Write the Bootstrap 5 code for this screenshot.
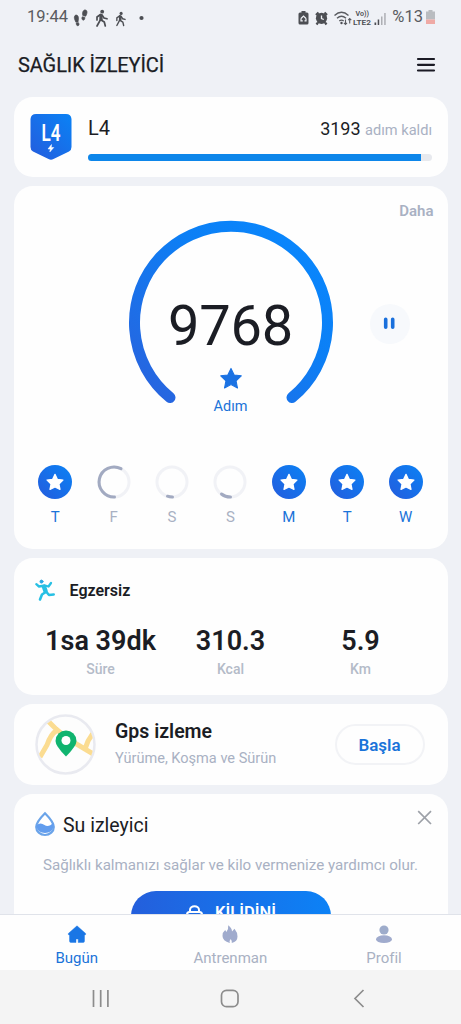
<!DOCTYPE html>
<html lang="tr">
<head>
<meta charset="utf-8">
<meta name="viewport" content="width=device-width, initial-scale=1">
<title>Sağlık İzleyici</title>
<link href="https://cdn.jsdelivr.net/npm/bootstrap@5.3.0/dist/css/bootstrap.min.css" rel="stylesheet">
<style>
body{font-family:Roboto,"Liberation Sans",sans-serif;background:#eff1f6;color:#1b1d24;height:1024px;overflow:hidden;line-height:1}
svg{display:block;flex:none;overflow:visible}
.muted{color:#a9b1c3}
.blue{color:#1a73d9}
.status{height:35px;padding:0 26px 0 27px;color:#595b60;font-size:16.5px}
.top-bar{height:62px;padding:0 26px 2px 18px}
.top-bar h1{font-size:20px;-webkit-text-stroke:.25px;letter-spacing:-.1px}
.feed{height:818px;padding:0 13.5px;gap:9px;overflow:hidden}
.panel{background:#fefefe;border-radius:19px;flex:none}
.level{height:80px;padding:0 15.5px 0 16.5px;gap:16px}
.level .progress{height:6.5px;background:#e7e9ee;border-radius:4px}
.level .progress-bar{background:#0d86ea}
.lv{font-size:20px}
.left{font-size:18px}
.left small{font-size:14.6px}
.steps{height:363px}
.steps .more{font-size:15px;font-weight:600;height:36px;padding:18px 14px 0}
.dial{grid-template-columns:1fr 204px 1fr;height:204px}
.dial-in{padding-top:76px}
.count{font-size:56px;letter-spacing:-.2px}
.pause{width:40px;height:40px;border-radius:50%;background:#f7f9fc}
.week{padding:39px 12.5px 0}
.day{width:58.4px;font-size:15px;gap:11px}
.exercise{height:137px;padding-top:20px}
.stats{padding:0 22px}
.stats>div{flex:1 1 0}
.big{font-size:27px;font-weight:600;white-space:nowrap}
.lbl{font-size:14px;font-weight:500;color:#b4bbc8;margin-top:7px}
.gps{height:81px;padding:0 23px 0 21px}
.start{width:90px;height:41px;border:2px solid #f2f3f6;border-radius:21px;font-size:17px;font-weight:600;background:#fefefe;padding:2px 0 0}
.water{height:180px}
.unlock{width:200px;height:50px;border-radius:25px;background:linear-gradient(90deg,#245fdc,#0c82f6);color:#fff;font-size:16.5px;font-weight:600;border:0}
.tabs{height:55px;background:#fefefe;box-shadow:0 -1px 0 #e0e3ea;position:relative;padding:0}
.tab{width:153.6px;font-size:15px;padding-top:10px;gap:8px}
.sys{height:54px;background:#f4f4f4;position:relative}
</style>
</head>
<body>
<svg width="0" height="0" class="position-absolute">
<defs>
<linearGradient id="ringG" x1="0" y1="1" x2="1" y2="0"><stop offset="0" stop-color="#2a62dd"/><stop offset=".6" stop-color="#0c7ff5"/><stop offset="1" stop-color="#0989ff"/></linearGradient>
<linearGradient id="dotG" x1="0" y1="1" x2="1" y2="0"><stop offset="0" stop-color="#245cdd"/><stop offset="1" stop-color="#0a82f5"/></linearGradient>
<path id="star" d="M0-10 3-3.700 9.700-3 4.800 1.800 6.100 8.500 0 5.300-6.100 8.500-4.800 1.800-9.700-3-3-3.700Z" stroke-linejoin="round"/>
<g id="done"><circle cx="17" cy="17" r="17" fill="url(#dotG)"/><use href="#star" transform="translate(17 17.500) scale(.82)" fill="#fff" stroke="#fff" stroke-width="1.500"/></g>
</defs>
</svg>
<div class="status d-flex align-items-center justify-content-between">
  <div class="d-flex align-items-center"><span>19:44</span>
    <svg width="78" height="18" style="margin-left:6px" fill="#4c4e53">
      <path d="M1 6.500c2-1.200 3.500.3 3.500 3l-.5 3.500-2.100.2C.7 10.500-.5 8.500 1 6.500ZM2.300 14l2.200-.3c1 1.800.5 3-.8 3S2.300 15.300 2.300 14ZM11.500 1c2.200.6 1.800 3.500.2 6.200l-2.900-.7C8 3 9.500.5 11.500 1ZM8.300 7.800l2.600.6c-.1 2-.8 3-1.900 2.700S7.500 9.300 8.300 7.800Z" stroke="#4c4e53" stroke-width=".7"/>
      <g id="walk"><circle cx="28.200" cy="2.700" r="1.900"/><path d="M26.500 5.500 23 8v3M26.800 5.500l-.5 5.500L23 17M26.300 10.500l4 2.500 1 4M28 6l2 3 3 .8" fill="none" stroke="#4c4e53" stroke-width="1.700" stroke-linecap="round" stroke-linejoin="round"/><path d="M25.500 5.200h2.700l.6 6-3.300.3Z"/></g>
      <use href="#walk" transform="translate(24 2.200) scale(.82 .84)"/>
      <circle cx="67.500" cy="9" r="2.100"/>
    </svg>
  </div>
  <div class="d-flex align-items-center">
    <svg width="92" height="18" fill="#4c4e53">
      <path d="M4.500 2h4v1.500H10q1.500 0 1.500 1.500v9q0 1.500-1.500 1.500H3Q1.500 15.500 1.500 14V5Q1.500 3.500 3 3.500h1.500Z"/><path d="M4 9.500 6.500 7 9 9.500M4 9.500v2.300h1.800M9 9.500v2.300H7.500" fill="none" stroke="#eff1f6" stroke-width="1.200"/>
      <circle cx="24.500" cy="9.300" r="5.600"/><path d="m19 6 2.500-2.500M30 6l-2.500-2.500M21 13.500l-1.500 2M28 13.500l1.500 2" stroke="#4c4e53" stroke-width="2.200"/><path d="M24.500 6.500v3l2.300 1" fill="none" stroke="#eff1f6" stroke-width="1.300"/>
      <g fill="none" stroke="#595b60" stroke-width="1.400"><path d="M37.500 6.500q7-6.500 14 0M40 9.300q4.500-4 9 0M42.300 12q2.200-1.800 4.400 0"/><path d="M48.500 10.500v5m-1.600-1.600 1.600 1.600 1.500-1.600M52.700 14.500v-5m-1.500 1.600 1.500-1.600 1.600 1.600" stroke-width="1.100"/></g><circle cx="44.500" cy="14" r="1.200"/>
      <text x="58.500" y="7.200" font-size="7.500" font-weight="600" textLength="13.500" lengthAdjust="spacingAndGlyphs">Vo))</text><text x="56" y="15.800" font-size="7.800" font-weight="600" textLength="18" lengthAdjust="spacingAndGlyphs">LTE2</text>
      <path d="M77.500 13.500h1.700V16h-1.700ZM80.700 10.500h1.500V16h-1.500Z"/><path d="M84 7.500h1.500V16H84ZM87.200 4h1.500v12h-1.500Z" opacity=".4"/>
    </svg>
    <span style="margin-left:3px">%13</span>
    <svg width="9" height="15" style="margin-left:3px"><path d="M2.500 0h4v1.500H9V9.500H0V1.500h2.500Z" fill="#b9bcc0"/><path d="M0 9.500h9V14H0Z" fill="#efaaa5"/></svg>
  </div>
</div>
<header class="top-bar d-flex align-items-center justify-content-between">
  <h1 class="m-0 fw-normal">SAĞLIK İZLEYİCİ</h1>
  <svg width="18" height="14" stroke="#1b1b25" stroke-width="2.200" stroke-linecap="round"><path d="M1 1h16M1 6.800h16M1 12.500h16"/></svg>
</header>
<main class="feed d-flex flex-column">
  <section class="panel level d-flex align-items-center">
    <svg width="42" height="48"><path d="M6 1h30q5 0 5.500 5v28q0 3-2.500 4.500L23.500 46Q21 47.300 18.500 46L3 38.500Q.5 37 .5 34V6Q1 1 6 1Z" fill="url(#dotG)"/><text x="21" y="27.500" text-anchor="middle" fill="#fff" font-size="24.500" font-weight="600" textLength="19" lengthAdjust="spacingAndGlyphs">L4</text><path d="m21.500 31.500-3.500 4.500h2.300l-.5 3 4-4.500h-2.500Z" fill="#fff" stroke="#fff" stroke-width=".5"/></svg>
    <div class="flex-grow-1" style="padding-top:5px">
      <div class="d-flex justify-content-between align-items-baseline mb-3"><span class="lv">L4</span><span class="left">3193 <small class="muted">adım kaldı</small></span></div>
      <div class="progress"><div class="progress-bar" style="width:96.700%"></div></div>
    </div>
  </section>
  <section class="panel steps">
    <div class="more muted text-end">Daha</div>
    <div class="dial d-grid">
      <div></div>
      <div class="position-relative text-center">
        <svg class="position-absolute top-0 start-0" width="204" height="204"><path d="M41 175.500A96.500 96.500 0 1 1 163 175.500" fill="none" stroke="url(#ringG)" stroke-width="11" stroke-linecap="round"/></svg>
        <div class="dial-in d-flex flex-column align-items-center"><div class="count">9768</div>
          <svg width="24" height="23" style="margin:12px 0 11px"><use href="#star" transform="translate(12 13) scale(1.060)" fill="#1b72e3" stroke="#1b72e3"/></svg>
          <div class="blue" style="font-size:14.500px">Adım</div></div>
      </div>
      <div class="d-flex align-items-center justify-content-center"><div class="pause d-flex align-items-center justify-content-center"><svg width="14" height="14" stroke="#1a70dc" stroke-width="3.600" stroke-linecap="round"><path d="M2.700 2.200v8M9.700 2.200v8"/></svg></div></div>
    </div>
    <div class="week d-flex">
      <div class="day d-flex flex-column align-items-center blue"><svg width="34" height="34"><use href="#done"/></svg>T</div>
      <div class="day d-flex flex-column align-items-center muted"><svg width="34" height="34" fill="none" stroke-width="3" stroke-linecap="round"><circle cx="17" cy="17" r="15" stroke="#f1f2f6"/><path d="M17.500 32A15 15 0 1 1 24 3.700" stroke="#a2aac1"/></svg>F</div>
      <div class="day d-flex flex-column align-items-center muted"><svg width="34" height="34" fill="none" stroke-width="3" stroke-linecap="round"><circle cx="17" cy="17" r="15" stroke="#f1f2f6"/><path d="M17.500 32Q14.500 32 12.500 31.200" stroke="#a2aac1"/></svg>S</div>
      <div class="day d-flex flex-column align-items-center muted"><svg width="34" height="34" fill="none" stroke-width="3" stroke-linecap="round"><circle cx="17" cy="17" r="15" stroke="#f1f2f6"/><path d="M17.500 32Q12 32 8.500 29" stroke="#a2aac1"/></svg>S</div>
      <div class="day d-flex flex-column align-items-center blue"><svg width="34" height="34"><use href="#done"/></svg>M</div>
      <div class="day d-flex flex-column align-items-center blue"><svg width="34" height="34"><use href="#done"/></svg>T</div>
      <div class="day d-flex flex-column align-items-center blue"><svg width="34" height="34"><use href="#done"/></svg>W</div>
    </div>
  </section>
  <section class="panel exercise">
    <div class="d-flex align-items-center" style="padding-left:21.500px;gap:14.500px;height:25px">
      <svg width="20" height="22" fill="none" stroke="#27c0e4" stroke-width="2.300" stroke-linecap="round" stroke-linejoin="round"><circle cx="6.500" cy="1.600" r="1.500" fill="#27a8e4" stroke="#27a8e4" stroke-width="1"/><path d="M1.300 4.200 4 6.500l6-1 3.500 1L16 3"/><path d="m9 6.800 1.500 4.200" stroke-width="4.500"/><path d="M10 12.500 7 14.500 5 19.500M11 11.500l3 3.500 4.700-.5" stroke-width="2.600"/></svg>
      <span style="font-size:16px;font-weight:600">Egzersiz</span>
    </div>
    <div class="stats d-flex text-center" style="margin-top:25px">
      <div><div class="big">1sa 39dk</div><div class="lbl">Süre</div></div>
      <div><div class="big">310.3</div><div class="lbl">Kcal</div></div>
      <div><div class="big">5.9</div><div class="lbl">Km</div></div>
    </div>
  </section>
  <section class="panel gps d-flex align-items-center">
    <svg width="61" height="61"><defs><clipPath id="mapC"><circle cx="30.500" cy="30.500" r="28"/></clipPath></defs><circle cx="30.500" cy="30.500" r="29" fill="#fdfdfd" stroke="#e9eaf0" stroke-width="2.500"/><g clip-path="url(#mapC)" fill="none" stroke="#fbdc91" stroke-width="5"><path d="M12 6 21 15 33 25 60 41M21 17Q16 20 12 31L5 43M60 16l-7 11-3 8"/></g><path d="M31 42.500Q20.500 32 20.500 27a10.500 10.500 0 0 1 21 0q0 5-10.500 15.500Z" fill="#10b46f"/><circle cx="31" cy="26.500" r="4.500" fill="#fff"/></svg>
    <div class="flex-grow-1" style="padding-left:19.500px"><div style="font-size:19.500px;font-weight:600">Gps izleme</div><div class="muted" style="font-size:14.550px;margin-top:11px">Yürüme, Koşma ve Sürün</div></div>
    <button class="btn start blue">Başla</button>
  </section>
  <section class="panel water">
    <div class="d-flex align-items-center" style="padding:18px 16px 0 21px;height:42px">
      <svg width="20" height="24"><path d="M10 1.200Q1.200 10 1.200 15a8.800 8 0 0 0 17.600 0Q18.800 10 10 1.200Z" fill="#fff" stroke="#6ba4e9" stroke-width="2.200"/><path d="M1.500 13q4-3 8 0t9-2.500V15a8.800 8 0 0 1-17 0Z" fill="#629dee"/></svg>
      <span class="flex-grow-1" style="font-size:19.500px;margin-left:8.500px;padding-top:3px">Su izleyici</span>
      <svg width="14" height="14" class="align-self-start" stroke="#9da1a8" stroke-width="1.700"><path d="m.2-.8 12.800 12.800M13-.8.2 12"/></svg>
    </div>
    <div class="text-center muted" style="font-size:15.150px;margin-top:22px;white-space:nowrap">Sağlıklı kalmanızı sağlar ve kilo vermenize yardımcı olur.</div>
    <button class="unlock d-flex justify-content-center mx-auto" style="margin-top:18px;padding-top:14px;gap:10px;padding-right:4px">
      <svg width="18" height="20" fill="none" stroke="#fff" stroke-width="2"><rect x="0" y="7" width="15" height="11" rx="2.500"/><path d="M3 6.500V5a4.500 3.700 0 0 1 9 0v1.500M7.500 9.500v3"/></svg>
      <span>KİLİDİNİ</span></button>
  </section>
</main>
<nav class="tabs d-flex">
  <div class="tab d-flex flex-column align-items-center blue"><svg width="20" height="18"><path d="M10 .8 18.700 8.500q.5 1.500-1.200 1.500v6q0 1.500-1.500 1.500H11.200V14H9v3.500H4Q2.500 17.500 2.500 16v-6Q.8 10 1.300 8.500Z" fill="#1a76e5" stroke="#1a76e5" stroke-width=".4"/></svg><span>Bugün</span></div>
  <div class="tab d-flex flex-column align-items-center muted"><svg width="18" height="18"><path d="M7.200.2Q11 3 11 6.500l2.500-2.700Q16.500 7.500 16.500 11.500q0 5-5.700 6.500.3-2-1-4-2 2-1 4Q1.500 16 1.500 11q0-4 2.700-6l1.200 2Q7.700 4.500 7.200.2Z" fill="#a0abcd"/></svg><span>Antrenman</span></div>
  <div class="tab d-flex flex-column align-items-center muted"><svg width="18" height="18"><circle cx="9" cy="5" r="4.600" fill="#9eaccb"/><ellipse cx="9" cy="14.200" rx="8" ry="3.900" fill="#a0abcd"/></svg><span>Profil</span></div>
</nav>
<div class="sys d-flex align-items-center" style="padding:3px 0 0">
  <svg width="461" height="20" fill="none" stroke="#8c8c8c" stroke-width="1.700"><path d="M93.500 1v17M100.700 1v17M107.900 1v17M363.500 1l-8.500 8.500 8.500 8.500"/><rect x="221.500" y="1.300" width="16.500" height="16.400" rx="5"/></svg>
</div>
</body>
</html>
